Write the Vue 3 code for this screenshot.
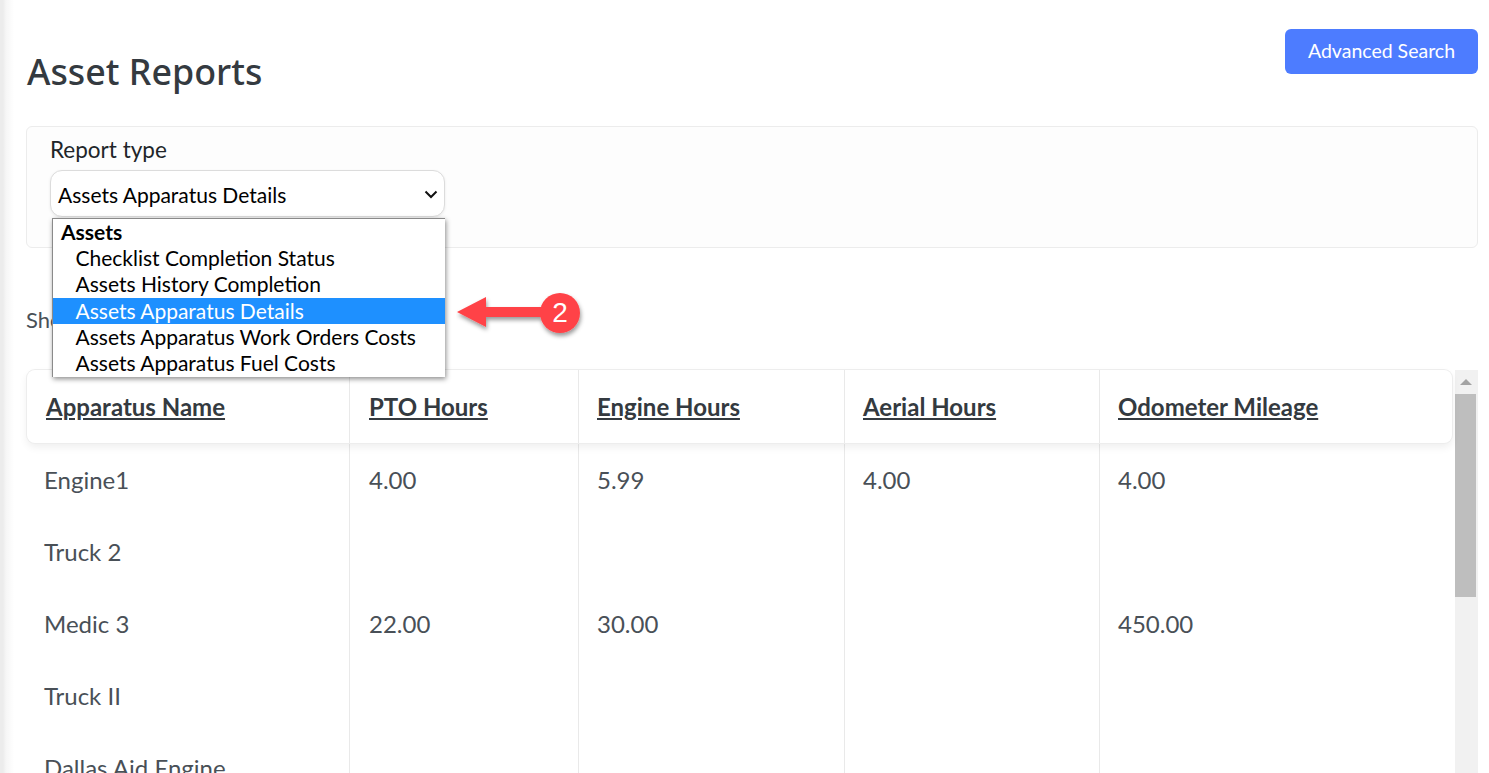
<script setup>
const columns = ['Apparatus Name', 'PTO Hours', 'Engine Hours', 'Aerial Hours', 'Odometer Mileage']
const rows = [
  ['Engine1', '4.00', '5.99', '4.00', '4.00'],
  ['Truck 2', '', '', '', ''],
  ['Medic 3', '22.00', '30.00', '', '450.00'],
  ['Truck II', '', '', '', ''],
  ['Dallas Aid Engine', '', '', '', '']
]
const options = ['Checklist Completion Status', 'Assets History Completion', 'Assets Apparatus Details', 'Assets Apparatus Work Orders Costs', 'Assets Apparatus Fuel Costs']
</script>

<template>
  <div class="page">
    <div class="edge"></div>
    <main class="content">
      <header class="head">
        <h1>Asset Reports</h1>
        <button class="search">Advanced Search</button>
      </header>

      <section class="filter">
        <div class="label">Report type</div>
        <div class="select">
          <span>Assets Apparatus Details</span>
          <svg width="14" height="14" viewBox="0 0 14 14"><path d="M1.500 4.500 7 10l5.500-5.500" fill="none" stroke="#111" stroke-width="2"/></svg>
        </div>
        <div class="menu">
          <div class="group">Assets</div>
          <div v-for="(o, i) in options" :key="o" class="option" :class="{ active: i === 2 }">{{ o }}</div>
        </div>
        <div class="callout">
          <svg width="132" height="56" viewBox="0 0 132 56">
            <defs>
              <filter id="sh" x="-10%" y="-20%" width="120%" height="150%">
                <feDropShadow dx="1" dy="3" stdDeviation="2" flood-color="#000" flood-opacity="0.4"/>
              </filter>
            </defs>
            <g filter="url(#sh)" fill="#ff4347">
              <path d="M1 24 30 9v10h62v10H30v10z"/>
              <circle cx="104" cy="25" r="20"/>
            </g>
          </svg>
          <span class="num">2</span>
        </div>
      </section>

      <div class="showing">Showing</div>

      <div class="tablewrap">
        <div class="table">
          <div class="thead">
            <div v-for="c in columns" :key="c" class="th"><u>{{ c }}</u></div>
          </div>
          <div v-for="r in rows" :key="r[0]" class="tr">
            <div v-for="(v, i) in r" :key="i" class="td">{{ v }}</div>
          </div>
        </div>
        <div class="scrollbar">
          <div class="up"></div>
          <div class="thumb"></div>
        </div>
      </div>
    </main>
  </div>
</template>

<style>
html, body { margin: 0; height: 100%; overflow: hidden; background: #fff; }
</style>

<style scoped>
.page {
  display: flex;
  height: 773px;
  overflow: hidden;
  font-family: Lato, "Liberation Sans", sans-serif;
  background: #fff;
}
.edge {
  width: 14px;
  margin-right: -14px;
  flex: none;
  background: linear-gradient(to right, #ececec 0, #ececec 3px, #f6f6f6 6px, #fff 14px);
}
.content {
  flex: 1;
  min-width: 0;
  padding: 29px 11px 0 26px;
  position: relative;
}
.head {
  display: flex;
  justify-content: space-between;
  align-items: flex-start;
  height: 97px;
}
h1 {
  margin: 19px 0 0 1px;
  font-family: "Noto Sans", "Open Sans", sans-serif;
  font-size: 35.800px;
  line-height: 46px;
  font-weight: 500;
  color: #343a40;
}
.search {
  width: 193px;
  height: 45px;
  border: 0;
  border-radius: 6px;
  background: #4d7cff;
  color: #fff;
  font-family: Lato, sans-serif;
  font-size: 19.500px;
  padding: 0 0 2px;
}
.filter {
  position: relative;
  height: 112px;
  border: 1px solid #ececec;
  border-radius: 6px;
  background: #fdfdfd;
  padding: 8px 23px 0;
}
.label {
  font-size: 22.500px;
  line-height: 30px;
  color: #212529;
}
.select {
  margin-top: 5px;
  width: 380px;
  height: 44px;
  border: 1px solid #dcdcdc;
  border-radius: 12px;
  background: #fff;
  box-shadow: 0 1px 3px rgba(0, 0, 0, 0.08);
  display: flex;
  align-items: center;
  justify-content: space-between;
  padding: 1px 6px 0 7px;
  font-size: 21px;
  color: #000;
}
.menu {
  position: absolute;
  left: 25px;
  top: 91px;
  width: 392px;
  height: 158px;
  overflow: hidden;
  background: #fff;
  border: 1px solid #8a8a8a;
  border-width: 1px 0 0 1px;
  box-shadow: 1px 2px 5px rgba(0, 0, 0, 0.45);
  font-size: 21px;
  line-height: 26.200px;
  color: #000;
  z-index: 3;
}
.group { font-weight: 700; padding-left: 8px; }
.option { padding-left: 22.500px; white-space: nowrap; }
.option.active { background: #1e90ff; color: #fff; }
.callout {
  position: absolute;
  left: 429px;
  top: 161px;
  width: 132px;
  height: 56px;
  z-index: 4;
}
.callout svg { display: block; }
.num {
  position: absolute;
  left: 84px;
  top: 5px;
  width: 40px;
  text-align: center;
  color: #fff;
  font-size: 28px;
  line-height: 40px;
  font-family: "Liberation Sans", sans-serif;
}
.showing {
  height: 122px;
  padding-top: 59px;
  box-sizing: border-box;
  font-size: 22px;
  line-height: 26px;
  color: #495057;
}
.tablewrap {
  display: flex;
  margin-left: 1px;
}
.table { width: 1425px; flex: none; }
.thead, .tr {
  display: grid;
  grid-template-columns: 322px 229px 266px 255px 353px;
}
.thead {
  height: 73px;
  margin-bottom: 1px;
  border-radius: 8px;
  background: #fff;
  box-shadow: 0 0 0 1px #ededed, 0 4px 8px rgba(0, 0, 0, 0.07);
  position: relative;
}
.th {
  display: flex;
  align-items: center;
  padding: 0 0 1px 18px;
  border-left: 1px solid #e9e9e9;
  font-size: 24px;
  font-weight: 700;
  color: #343a40;
}
.th:first-child { border-left: 0; padding-left: 19px; }
.th:nth-child(2) { padding-left: 19px; }
.tr { height: 72px; }
.td {
  padding: 21px 0 0 18px;
  border-left: 1px solid #e9e9e9;
  font-size: 24px;
  line-height: 30px;
  color: #495057;
}
.td:first-child { border-left: 0; padding-left: 17px; }
.td:nth-child(2) { padding-left: 19px; }
.scrollbar {
  margin-left: 3px;
  width: 23px;
  background: #f1f1f1;
}
.up {
  height: 24px;
  position: relative;
}
.up::after {
  content: "";
  position: absolute;
  left: 5px;
  top: 9px;
  border: 6px solid transparent;
  border-top: 0;
  border-bottom: 6px solid #a3a3a3;
}
.thumb {
  height: 203px;
  width: 21px;
  background: #bebebe;
}
</style>
